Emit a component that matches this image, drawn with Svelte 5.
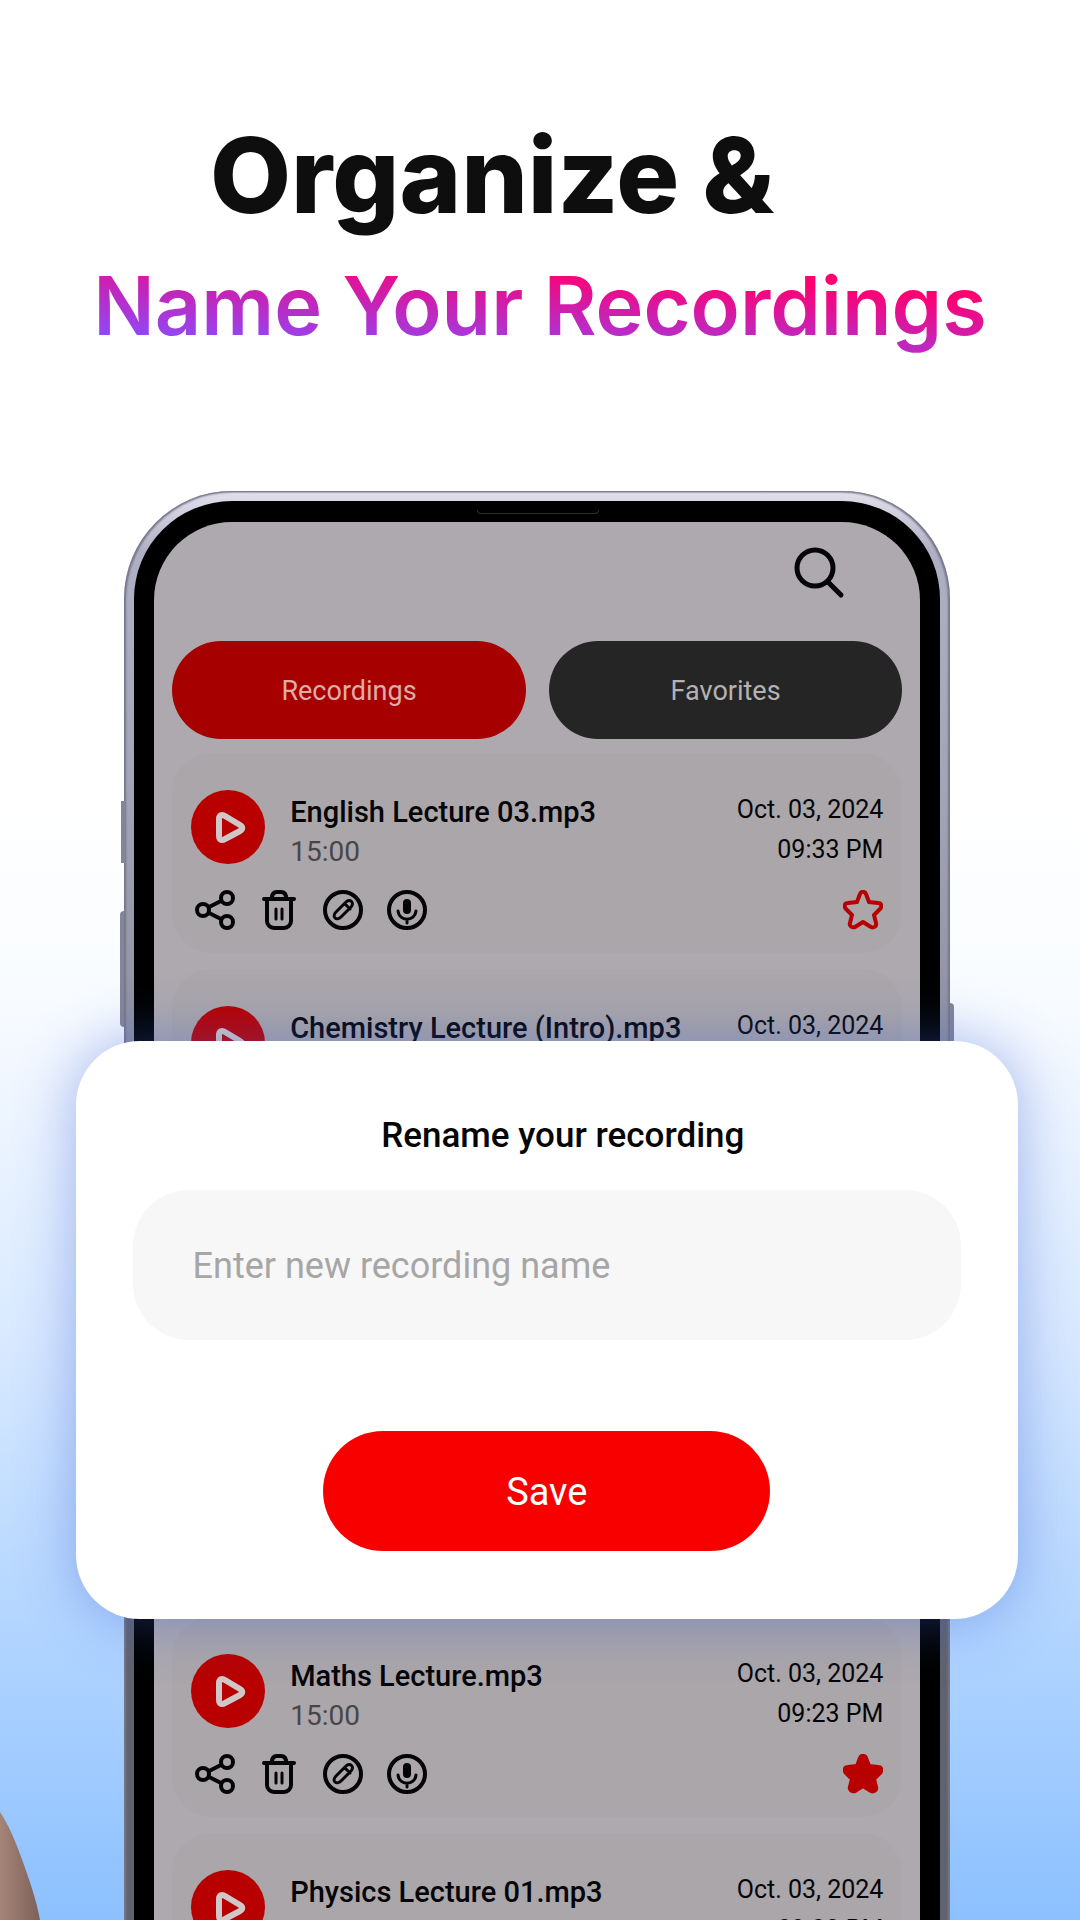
<script lang="ts">
	type Recording = { name: string; length: string; date: string; time: string; favorite: boolean };

	let newName = $state('');
	let tab = $state('Recordings');
	let recordings = $state<Recording[]>([
		{ name: 'English Lecture 03.mp3', length: '15:00', date: 'Oct. 03, 2024', time: '09:33 PM', favorite: false },
		{ name: 'Chemistry Lecture (Intro).mp3', length: '15:00', date: 'Oct. 03, 2024', time: '09:33 PM', favorite: false },
		{ name: 'Lecture.mp3', length: '15:00', date: 'Oct. 03, 2024', time: '09:33 PM', favorite: false },
		{ name: 'Lecture.mp3', length: '15:00', date: 'Oct. 03, 2024', time: '09:23 PM', favorite: false },
		{ name: 'Maths Lecture.mp3', length: '15:00', date: 'Oct. 03, 2024', time: '09:23 PM', favorite: true },
		{ name: 'Physics Lecture 01.mp3', length: '15:00', date: 'Oct. 03, 2024', time: '09:23 PM', favorite: true }
	]);
</script>

<main>
	<header>
		<h1>Organize &amp;</h1>
		<p class="tagline">Name Your Recordings</p>
	</header>

	<div class="stage">
		<div class="phone">
			<span class="side mute"></span>
			<span class="side volume"></span>
			<span class="side power"></span>
			<div class="bezel">
				<span class="speaker"></span>
				<div class="screen">
					<div class="topbar">
						<button aria-label="Search">
							<svg width="56" height="56" viewBox="0 0 56 56">
								<circle cx="25" cy="24" r="18" />
								<path d="M38 38L51 51" />
							</svg>
						</button>
					</div>

					<nav>
						{#each ['Recordings', 'Favorites'] as label}
							<button class:active={tab === label} onclick={() => (tab = label)}>{label}</button>
						{/each}
					</nav>

					<ul>
						{#each recordings as rec}
							<li>
								<div class="info">
									<button class="play" aria-label="Play">
										<svg width="74" height="74" viewBox="0 0 74 74">
											<path d="M28 29v17c0 4 3 5 6 3l15-8c3-2 3-4 0-6L34 26c-3-2-6-1-6 3z" />
										</svg>
									</button>
									<div class="name">
										<h2>{rec.name}</h2>
										<span>{rec.length}</span>
									</div>
									<div class="date">
										<span>{rec.date}</span>
										<span>{rec.time}</span>
									</div>
								</div>
								<div class="actions">
									<button aria-label="Share">
										<svg width="40" height="40" viewBox="0 0 40 40">
											<circle cx="8" cy="20" r="6" />
											<circle cx="32" cy="8" r="6" />
											<circle cx="32" cy="32" r="6" />
											<path d="M14 17l12-6M14 23l12 6" />
										</svg>
									</button>
									<button aria-label="Delete">
										<svg width="40" height="40" viewBox="0 0 40 40">
											<path d="M5 9h30M8 9v22a7 7 0 0 0 7 7h10a7 7 0 0 0 7-7V9M13 8c0-4 2-6 5-6h4c3 0 5 2 5 6" />
											<path class="thin" d="M17 19v10M23 19v10" />
										</svg>
									</button>
									<button aria-label="Rename">
										<svg width="40" height="40" viewBox="0 0 40 40">
											<circle cx="20" cy="20" r="18" />
											<path class="thin" d="M12 28c-2-2 0-5 1-6l10-10c4-4 9 1 5 5L18 27c-1 1-4 3-6 1zM22 14l5 5" />
										</svg>
									</button>
									<button aria-label="Record">
										<svg width="40" height="40" viewBox="0 0 40 40">
											<circle cx="20" cy="20" r="18" />
											<rect class="solid" x="16" y="9" width="8" height="15" rx="4" />
											<path class="thin" d="M11 21c1 11 17 11 18 0M20 29v4" />
										</svg>
									</button>
									<button class="star" class:on={rec.favorite} aria-label="Favorite" onclick={() => (rec.favorite = !rec.favorite)}>
										<svg width="40" height="40" viewBox="0 0 40 40">
											<path d="M17 4c1-3 5-3 6 0l3 8 9 1c4 0 4 4 2 6l-6 6 2 8c1 4-3 5-5 4l-8-5-8 5c-3 1-6-1-5-4l2-8-6-6c-2-2-2-6 2-6l9-1z" />
										</svg>
									</button>
								</div>
							</li>
						{/each}
					</ul>
				</div>
			</div>
		</div>

		<form class="dialog" onsubmit={(e) => e.preventDefault()}>
			<label for="new-name">Rename your recording</label>
			<input id="new-name" type="text" placeholder="Enter new recording name" bind:value={newName} />
			<button>Save</button>
		</form>
	</div>

	<svg class="finger" width="44" height="112" viewBox="0 0 44 112">
		<defs>
			<linearGradient id="skin" x1="0" y1="0" x2="1" y2="0">
				<stop offset="0" stop-color="#a58478" />
				<stop offset="1" stop-color="#7d6158" />
			</linearGradient>
		</defs>
		<path d="M0 4C8 16 14 30 20 46C28 68 36 90 40 112H0z" fill="url(#skin)" />
	</svg>
</main>

<style>
	:global(body) {
		margin: 0;
	}

	main {
		position: relative;
		height: 100vh;
		overflow: hidden;
		font-family: Roboto, 'Liberation Sans', sans-serif;
		background: linear-gradient(#fff 42%, #f8fbff 52%, #d8e9ff 70%, #b4d6ff 84%, #8cc0ff);
	}

	button {
		padding: 0;
		border: 0;
		background: none;
		font: inherit;
		color: inherit;
	}

	svg {
		display: block;
		fill: none;
		stroke: currentColor;
		stroke-width: 4;
		stroke-linecap: round;
		stroke-linejoin: round;
	}

	header {
		padding: 110px 0 0;
		font-family: Inter, 'Open Sans', sans-serif;
		text-align: center;
	}

	h1 {
		margin: 0;
		padding-right: 96px;
		font-size: 105px;
		line-height: 130px;
		font-weight: 800;
		color: #0e0e0e;
	}

	.tagline {
		width: fit-content;
		margin: 16px auto 0;
		font-size: 81px;
		line-height: 100px;
		font-weight: 600;
		color: transparent;
		background: linear-gradient(4deg, #8a4cff 10%, #c822b4 46%, #ff0070 74%);
		background-clip: text;
	}

	.stage {
		position: relative;
		margin-top: 135px;
	}

	.phone {
		position: relative;
		width: 76.5%;
		margin-left: 11.5%;
		padding: 10px 10px 0;
		box-sizing: border-box;
		border-radius: 108px 108px 0 0;
		background: linear-gradient(#e2e2ee, #b0b0c4 60px, #a4a4b8 300px, #60636e 1100px);
		box-shadow: inset 2px 1px 2px #77778a, inset -2px 1px 2px #77778a;
	}

	.side {
		position: absolute;
		width: 4px;
		background: #85859a;
	}

	.mute {
		left: -3px;
		top: 310px;
		height: 62px;
	}

	.volume {
		left: -4px;
		top: 420px;
		height: 116px;
		border-radius: 4px 0 0 4px;
	}

	.power {
		right: -4px;
		top: 512px;
		height: 160px;
		border-radius: 0 4px 0 0;
	}

	.bezel {
		position: relative;
		padding: 21px 20px 0;
		border-radius: 98px 98px 0 0;
		background: #000;
	}

	.speaker {
		position: absolute;
		top: 9px;
		left: 50%;
		width: 120px;
		height: 3px;
		margin-left: -60px;
		border: 1px solid #2c2e30;
		border-top: 0;
		border-radius: 0 0 4px 4px;
	}

	.screen {
		padding: 22px 18px 0;
		border-radius: 78px 78px 0 0;
		background: #ada9ae;
		color: #050508;
	}

	.topbar {
		display: flex;
		justify-content: flex-end;
		padding-right: 56px;
	}

	.topbar svg {
		stroke-width: 5;
	}

	nav {
		display: flex;
		gap: 23px;
		margin-top: 41px;
	}

	nav button {
		flex: 1;
		height: 98px;
		padding-top: 2px;
		border-radius: 49px;
		font-size: 27px;
		color: #b5b2b4;
		background: #252525;
	}

	nav button.active {
		background: #a60000;
		color: #e0aca8;
	}

	ul {
		display: flex;
		flex-direction: column;
		gap: 16px;
		margin: 14px 0 0;
		padding: 0;
		list-style: none;
	}

	li {
		height: 200px;
		padding: 37px 19px 0;
		box-sizing: border-box;
		border-radius: 40px;
		background: #aaa6a9;
	}

	.info {
		display: flex;
	}

	.play {
		width: 74px;
		height: 74px;
		border-radius: 50%;
		background: #b90000;
		color: #d0c8c8;
	}

	.play svg {
		stroke-width: 6;
	}

	.name {
		flex: 1;
		margin-left: 25px;
	}

	h2 {
		margin: 0;
		font-size: 29px;
		line-height: 44px;
		font-weight: 500;
	}

	.name span {
		display: block;
		font-size: 28px;
		line-height: 36px;
		color: #48464a;
	}

	.date {
		display: flex;
		flex-direction: column;
		text-align: right;
		font-size: 25px;
		line-height: 40px;
	}

	.actions {
		display: flex;
		gap: 24px;
		margin-top: 20px;
		padding-left: 4px;
	}

	.solid {
		fill: currentColor;
		stroke: none;
	}

	.thin {
		stroke-width: 3;
	}

	.star {
		margin-left: auto;
		color: #b90000;
	}

	.star.on svg {
		fill: currentColor;
	}

	.dialog {
		position: absolute;
		top: 550px;
		left: 7%;
		right: 62px;
		display: flex;
		flex-direction: column;
		padding: 71px 57px 68px;
		border-radius: 64px;
		background: #fff;
		box-shadow: 0 0 60px rgba(60, 95, 210, 0.44);
	}

	.dialog label {
		padding-left: 32px;
		text-align: center;
		font-size: 35px;
		line-height: 48px;
		font-weight: 500;
		color: #050505;
	}

	.dialog input {
		height: 150px;
		margin-top: 30px;
		padding: 2px 60px 0;
		box-sizing: border-box;
		border: 0;
		border-radius: 56px;
		background: #f7f7f7;
		font: 400 36px Roboto, 'Liberation Sans', sans-serif;
		color: #111;
	}

	.dialog input::placeholder {
		color: #a6a6a6;
		opacity: 1;
	}

	.dialog button {
		align-self: center;
		width: 54%;
		height: 120px;
		margin-top: 91px;
		padding-top: 2px;
		border-radius: 60px;
		background: #f90000;
		font-size: 38px;
		color: #fff;
	}

	.finger {
		position: absolute;
		left: 0;
		bottom: 0;
		stroke: none;
	}
</style>
